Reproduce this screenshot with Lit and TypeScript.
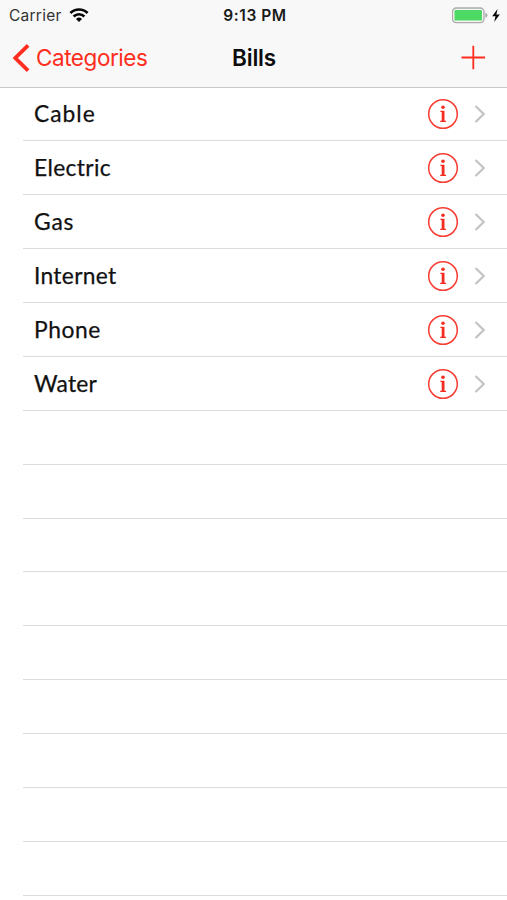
import { LitElement, html, css } from "lit";
import { customElement, property } from "lit/decorators.js";

const BILLS = [
  { name: "Cable", spacing: 1 },
  { name: "Electric", spacing: 0.35 },
  { name: "Gas", spacing: 0.8 },
  { name: "Internet", spacing: 0.3 },
  { name: "Phone", spacing: 0.55 },
  { name: "Water", spacing: 0.2 },
];
const EMPTY_ROWS = 10;

@customElement("status-bar")
class StatusBar extends LitElement {
  static styles = css`
    :host {
      display: grid;
      grid-template-columns: 1fr auto 1fr;
      align-items: center;
      height: 30px;
      padding: 0 6px 0 9px;
      font: 16px/31px Inter, "Liberation Sans", sans-serif;
      color: #222;
    }
    .side { display: flex; align-items: center; height: 30px; }
    .carrier { font-size: 15.5px; letter-spacing: 0.25px; color: #333; }
    .wifi { margin-left: 7px; }
    .time { font-size: 15.5px; font-weight: 600; letter-spacing: 0.55px; color: #1a1a1a; }
    .right { justify-content: flex-end; }
    .bolt { margin-left: 3px; }
    svg { display: block; }
  `;
  render() {
    return html`
      <div class="side">
        <span class="carrier">Carrier</span>
        <svg class="wifi" width="20" height="15" viewBox="0 0 20 15" fill="none" stroke="#050505" stroke-width="2.7">
          <path d="M1.4 5 A12.3 12.3 0 0 1 18.6 5" />
          <path d="M4.6 8.4 A7.9 7.9 0 0 1 15.4 8.4" />
          <path d="M10 14 L7 11 A4.4 4.4 0 0 1 13 11 Z" fill="#050505" stroke="none" />
        </svg>
      </div>
      <span class="time">9:13 PM</span>
      <div class="side right">
        <svg width="37" height="17" viewBox="0 0 37 17">
          <rect x="0.5" y="1" width="31.5" height="14.6" rx="3.8" fill="#f4f4f4" stroke="#aaa" stroke-width="1.3" />
          <rect x="2.5" y="3" width="27.5" height="10.6" rx="1.2" fill="#4cd964" />
          <path d="M33.3 5.8 Q35.5 6.6 35.5 8.3 T33.3 10.8Z" fill="#aaa" />
        </svg>
        <svg class="bolt" width="9" height="13" viewBox="0 0 9 13">
          <path d="M5.5 0 L0.2 7.2 H3.5 L2.2 13 L7.8 5.4 H4.4Z" fill="#050505" />
        </svg>
      </div>
    `;
  }
}

@customElement("nav-bar")
class NavBar extends LitElement {
  static styles = css`
    :host {
      display: grid;
      grid-template-columns: 1fr auto 1fr;
      align-items: center;
      height: 56px;
      padding: 0 21px 0 12px;
      font: 23px/56px Inter, "Liberation Sans", sans-serif;
      color: #ff2d20;
    }
    .back { display: flex; align-items: center; height: 56px; }
    .label { margin-left: 6px; font-size: 22.5px; letter-spacing: -0.45px; }
    .title { margin-left: 10px; font-size: 22.5px; font-weight: 600; letter-spacing: -0.2px; color: #0c0c0c; }
    .add { justify-self: end; margin-bottom: 2px; }
    svg { display: block; }
  `;
  render() {
    return html`
      <div class="back">
        <svg width="18" height="28" viewBox="0 0 18 28" fill="none" stroke="currentColor" stroke-width="3.8">
          <path d="M16.1 1.4 L3.3 14 L16.1 26.6" />
        </svg>
        <span class="label">Categories</span>
      </div>
      <span class="title">Bills</span>
      <svg class="add" width="25" height="25" viewBox="0 0 25 25" fill="none" stroke="currentColor" stroke-width="1.8">
        <path d="M12.3 0.7 V24.3 M0.5 12.5 H24.1" />
      </svg>
    `;
  }
}

@customElement("bill-row")
class BillRow extends LitElement {
  @property() name = "";
  @property({ type: Number }) spacing = 0;

  static styles = css`
    :host { display: block; padding-left: 23px; }
    .row {
      display: flex;
      align-items: center;
      box-sizing: border-box;
      height: 53.9px;
      padding: 1px 21px 0 11px;
      border-bottom: 1px solid #dcdcdc;
    }
    .name {
      flex: 1;
      padding-bottom: 2px;
      font: 400 22.8px/50px Lato, "Liberation Sans", sans-serif;
      color: #111;
      -webkit-text-stroke: 0.25px #111;
    }
    .info { margin-right: 1px; }
    .chevron { margin-left: 14px; }
    svg { display: block; }
  `;
  render() {
    return html`
      <div class="row">
        ${this.name
          ? html`
              <span class="name" style="letter-spacing:${this.spacing}px">${this.name}</span>
              <svg class="info" width="32" height="32" viewBox="0 0 32 32">
                <circle cx="16" cy="16" r="14.3" fill="none" stroke="#f83c32" stroke-width="1.5" />
                <circle cx="16" cy="9.2" r="1.8" fill="#f52c22" />
                <path d="M13.4 12.8 H17.5 V22.8 H19 V23.9 H13.2 V22.8 H14.7 V13.9 H13.4Z" fill="#f52c22" />
              </svg>
              <svg class="chevron" width="12" height="18" viewBox="0 0 12 18" fill="none" stroke="#c4c4c6" stroke-width="2.3">
                <path d="M1.5 1 L9.7 9 L1.5 17" />
              </svg>
            `
          : null}
      </div>
    `;
  }
}

@customElement("app-root")
class AppRoot extends LitElement {
  static styles = css`
    :host {
      display: block;
      height: 900px;
      overflow: hidden;
      background: #fff;
    }
    .header {
      box-sizing: border-box;
      height: 88px;
      background: #f8f8f8;
      border-bottom: 1px solid #c8c8c8;
    }
    .list { margin-top: -0.6px; }
  `;
  render() {
    return html`
      <div class="header">
        <status-bar></status-bar>
        <nav-bar></nav-bar>
      </div>
      <div class="list">
        ${BILLS.map((b) => html`<bill-row .name=${b.name} .spacing=${b.spacing}></bill-row>`)}
        ${Array.from({ length: EMPTY_ROWS }, () => html`<bill-row></bill-row>`)}
      </div>
    `;
  }
}
